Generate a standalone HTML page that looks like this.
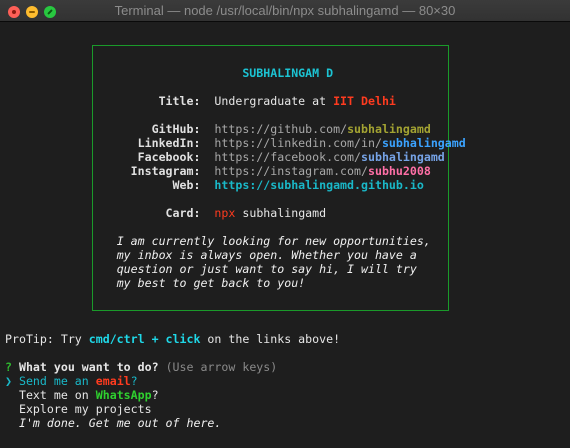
<!DOCTYPE html>
<html><head><meta charset="utf-8"><style>
html,body{margin:0;padding:0;background:#1e1e1e;}
body{width:570px;height:448px;overflow:hidden;position:relative;}
.bar{position:absolute;left:0;top:0;width:570px;height:21px;background:linear-gradient(#3b3b3b,#323232);border-bottom:1px solid #0a0a0a;}
.t{position:absolute;left:0;right:0;top:3px;text-align:center;font:13px "Liberation Sans",sans-serif;color:#8c8c8c;}
.d{position:absolute;top:6px;width:12px;height:12px;border-radius:50%;}
.d i{position:absolute;left:3px;top:5px;width:6px;height:2px;border-radius:1px;}
.box{position:absolute;left:92px;top:45px;width:355px;height:264px;border:1.5px solid #1a9a2a;}
pre{position:absolute;left:5px;top:38px;margin:0;font:11.6px/14px "DejaVu Sans Mono","Liberation Mono",monospace;color:#e6e6e6;}
b{font-weight:bold}
.c{color:#1cc3d3;font-weight:bold}
.l{font-weight:bold;color:#e0e0e0}
.g{color:#a8a8a8}
.r{color:#ff3b1f;font-weight:bold}
.i{font-style:italic;color:#f0f0f0}
</style></head><body>
<div class="bar"><div class="t">Terminal — node /usr/local/bin/npx subhalingamd — 80×30</div>
<div class="d" style="left:8px;background:#fe5f57"><i style="left:4px;top:4px;width:4px;height:4px;border-radius:50%;background:#8c1a10"></i></div>
<div class="d" style="left:26px;background:#febc2e"><i style="background:#8a5a00"></i></div>
<div class="d" style="left:44px;background:#28c840"><i style="background:#0b5a12;transform:rotate(-45deg)"></i></div>
</div>
<div class="box"></div>
<pre>


                                  <span class="c">SUBHALINGAM D</span>

                      <span class="l">Title:</span>  Undergraduate at <span class="r">IIT Delhi</span>

                     <span class="l">GitHub:</span>  <span class="g">https://github.com/</span><b style="color:#a3a332">subhalingamd</b>
                   <span class="l">LinkedIn:</span>  <span class="g">https://linkedin.com/in/</span><b style="color:#3ba3ff">subhalingamd</b>
                   <span class="l">Facebook:</span>  <span class="g">https://facebook.com/</span><b style="color:#76a3e6">subhalingamd</b>
                  <span class="l">Instagram:</span>  <span class="g">https://instagram.com/</span><b style="color:#ff6fa6">subhu2008</b>
                        <span class="l">Web:</span>  <b style="color:#1ab8c8">https://subhalingamd.github.io</b>

                       <span class="l">Card:</span>  <span style="color:#ff3b1f">npx</span> subhalingamd

                <span class="i">I am currently looking for new opportunities,</span>
                <span class="i">my inbox is always open. Whether you have a</span>
                <span class="i">question or just want to say hi, I will try</span>
                <span class="i">my best to get back to you!</span>



ProTip: Try <span class="c" style="color:#1fd8e8">cmd/ctrl + click</span> on the links above!

<b style="color:#2fb82f">?</b> <b>What you want to do?</b> <span style="color:#8a8a8a">(Use arrow keys)</span>
<span style="color:#19b9c9">❯ Send me an </span><span class="r">email</span><span style="color:#19b9c9">?</span>
  Text me on <b style="color:#2fd02f">WhatsApp</b>?
  Explore my projects
  <span class="i">I'm done. Get me out of here.</span>
</pre>
</body></html>
